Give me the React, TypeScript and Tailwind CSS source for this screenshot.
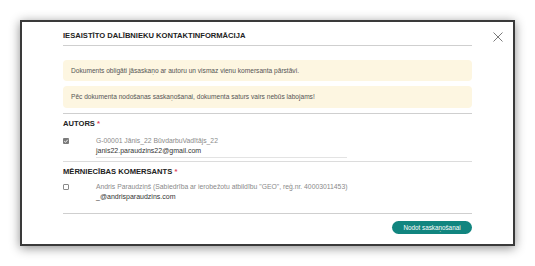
import React from "react";

function Check({ checked }: { checked?: boolean }) {
  return checked ? (
    <span className="flex h-[6px] w-[6px] shrink-0 items-center justify-center rounded-[1px] bg-[#7a7a7a]">
      <svg viewBox="0 0 6 6" className="h-[6px] w-[6px]">
        <path d="M1.2 3.1 L2.5 4.3 L4.8 1.7" stroke="#fff" strokeWidth="0.9" fill="none" />
      </svg>
    </span>
  ) : (
    <span className="block h-[6px] w-[6px] shrink-0 rounded-[1px] border border-[#8a8a8a] bg-white" />
  );
}

export default function App() {
  return (
    <div
      className="h-[266px] w-[535px] bg-white pl-[20px] pt-[20px]"
      style={{ fontFamily: '"Liberation Sans", Arial, sans-serif' }}
    >
      <div className="relative h-[226px] w-[495px] border-2 border-[#3a3a3a] bg-white px-[41px] shadow-[0_2px_10px_rgba(0,0,0,0.45)]">
        <svg
          viewBox="0 0 10 10"
          className="absolute right-[10px] top-[10px] h-[10px] w-[10px]"
        >
          <path d="M0.5 0.5 L9.5 9.5 M9.5 0.5 L0.5 9.5" stroke="#6b6b6b" strokeWidth="0.9" />
        </svg>

        <div className="border-b border-[#cfcfcf] pb-[5px] pt-[10px] text-[7.6px] font-bold leading-[8px] text-[#222]">
          IESAISTĪTO DALĪBNIEKU KONTAKTINFORMĀCIJA
        </div>

        <div className="mt-[14px] flex h-[21px] items-center rounded-[4px] bg-[#fdf6e1] px-[8px] text-[6.6px] text-[#555]">
          Dokuments obligāti jāsaskaņo ar autoru un vismaz vienu komersanta pārstāvi.
        </div>
        <div className="mt-[5px] flex h-[22px] items-center rounded-[4px] bg-[#fdf6e1] px-[8px] text-[6.6px] text-[#555]">
          Pēc dokumenta nodošanas saskaņošanai, dokumenta saturs vairs nebūs labojams!
        </div>

        <div className="mt-[5px] border-t border-[#cfcfcf]">
          <div className="pt-[6px] text-[7.6px] font-bold leading-[8px] text-[#222]">
            AUTORS <span className="text-[#e0435a]">*</span>
          </div>
          <div className="mt-[8px] flex items-start">
            <div className="pt-[2px]">
              <Check checked />
            </div>
            <div className="ml-[27px] flex flex-col">
              <div className="text-[6.8px] leading-[10px] text-[#8a8a8a]">
                G-00001 Jānis_22 BūvdarbuVadītājs_22
              </div>
              <div className="w-[251px] border-b border-[#e3e3e3] pb-[1px] text-[7px] leading-[10px] text-[#333]">
                janis22.paraudzins22@gmail.com
              </div>
            </div>
          </div>
        </div>

        <div className="mt-[3px] border-t border-[#dcdcdc]">
          <div className="pt-[6px] text-[7.6px] font-bold leading-[8px] text-[#222]">
            MĒRNIECĪBAS KOMERSANTS <span className="text-[#e0435a]">*</span>
          </div>
          <div className="mt-[6px] flex items-start">
            <div className="pt-[2px]">
              <Check />
            </div>
            <div className="ml-[27px] flex flex-col">
              <div className="text-[6.8px] leading-[10px] text-[#8a8a8a]">
                Andris Paraudziņš (Sabiedrība ar ierobežotu atbildību "GEO", reģ.nr. 40003011453)
              </div>
              <div className="text-[7px] leading-[9px] text-[#333]">_@andrisparaudzins.com</div>
            </div>
          </div>
        </div>

        <div className="mt-[12px] border-t border-[#cfcfcf]" />

        <div className="mt-[7px] flex justify-end">
          <button className="flex h-[13px] w-[80px] items-center justify-center rounded-full bg-[#11857f] text-[6.3px] text-white">
            Nodot saskaņošanai
          </button>
        </div>
      </div>
    </div>
  );
}
